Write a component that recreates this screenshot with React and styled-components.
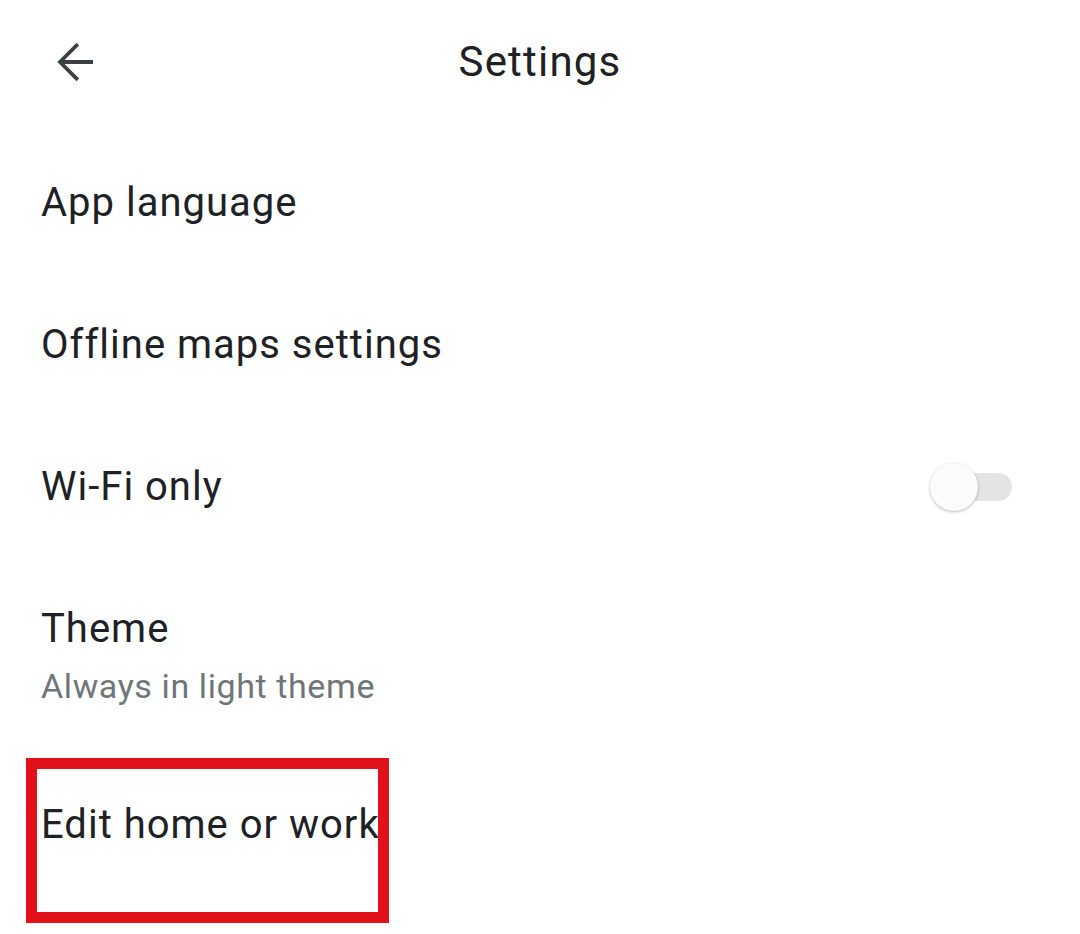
import styled, { createGlobalStyle } from "styled-components";

const GlobalStyle = createGlobalStyle`
  html, body {
    margin: 0;
    padding: 0;
    background: #ffffff;
  }
  body {
    font-family: Roboto, "Open Sans", sans-serif;
    color: #202124;
  }
`;

const Screen = styled.div`
  width: 1080px;
  height: 934px;
  overflow: hidden;
  background: #fff;
`;

const Header = styled.header`
  height: 124px;
  margin-bottom: 8px;
  display: grid;
  grid-template-columns: 160px 1fr 160px;
  align-items: center;
`;

const BackButton = styled.button`
  border: 0;
  background: none;
  padding: 0;
  margin-left: 57px;
  width: 36px;
  height: 40px;
  display: flex;
  align-items: center;
  justify-content: center;
  color: #3c4043;
`;

const Title = styled.h1`
  margin: 0;
  text-align: center;
  font-size: 42px;
  font-weight: 400;
  line-height: 48px;
  letter-spacing: 1.2px;
  color: #202124;
`;

const Row = styled.div`
  position: relative;
  height: ${(p) => p.$height || 142}px;
  padding: 0 68px 0 41px;
  display: flex;
  align-items: center;
  justify-content: space-between;
`;

const Texts = styled.div`
  display: flex;
  flex-direction: column;
`;

const Label = styled.span`
  font-size: 40px;
  line-height: 48px;
  letter-spacing: 1px;
  color: #202124;
`;

const Sub = styled.span`
  font-size: 34px;
  line-height: 44px;
  margin-top: 11px;
  letter-spacing: 0.6px;
  color: #70757a;
`;

const Switch = styled.div`
  position: relative;
  width: 82px;
  height: 50px;
  display: flex;
  align-items: center;
`;

const Track = styled.div`
  margin-left: 26px;
  width: 56px;
  height: 28px;
  border-radius: 14px;
  background: #e4e4e4;
`;

const Thumb = styled.div`
  position: absolute;
  left: 0;
  top: 1px;
  width: 48px;
  height: 48px;
  border-radius: 50%;
  background: #fbfbfb;
  box-shadow: 0 1px 3px rgba(0, 0, 0, 0.28);
`;

const Highlight = styled.div`
  position: absolute;
  left: 26px;
  top: 4px;
  width: 363px;
  height: 165px;
  box-sizing: border-box;
  border: 11px solid #e3121a;
  pointer-events: none;
`;

const items = [
  { label: "App language" },
  { label: "Offline maps settings" },
  { label: "Wi-Fi only", toggle: true },
  { label: "Theme", sub: "Always in light theme", height: 196 },
  { label: "Edit home or work", marked: true },
];

const App = () => {
  return (
    <Screen>
      <GlobalStyle />
      <Header>
        <BackButton aria-label="Back">
          <svg width="36" height="40" viewBox="0 0 36 40" fill="none">
            <path
              d="M35 20H4M19.5 3.5L3 20l16.5 16.5"
              stroke="currentColor"
              strokeWidth="3.8"
              strokeLinecap="square"
            />
          </svg>
        </BackButton>
        <Title>Settings</Title>
        <span />
      </Header>
      {items.map((it) => (
        <Row key={it.label} $height={it.height}>
          <Texts>
            <Label>{it.label}</Label>
            {it.sub && <Sub>{it.sub}</Sub>}
          </Texts>
          {it.toggle && (
            <Switch>
              <Track />
              <Thumb />
            </Switch>
          )}
          {it.marked && <Highlight />}
        </Row>
      ))}
    </Screen>
  );
};

export default App;
